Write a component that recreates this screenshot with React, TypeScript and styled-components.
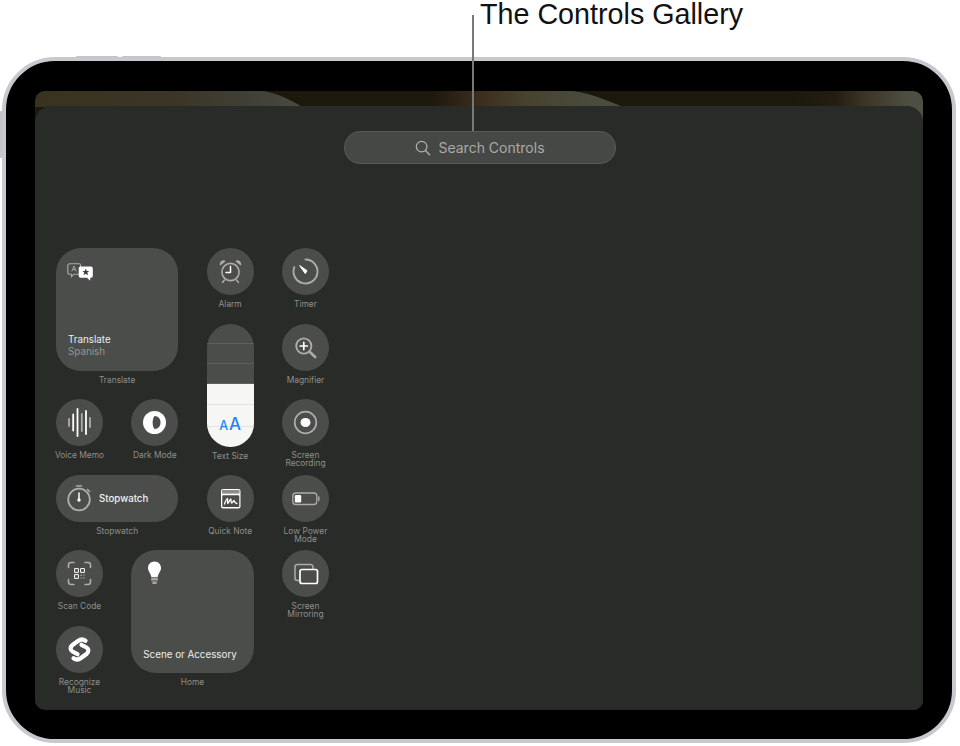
import React from "react";
import styled, { createGlobalStyle } from "styled-components";

const GlobalStyle = createGlobalStyle`
  html, body {
    margin: 0;
    padding: 0;
    background: #ffffff;
  }
  body {
    width: 960px;
    height: 746px;
    overflow: hidden;
    font-family: "Inter", "Liberation Sans", sans-serif;
  }
`;

const Page = styled.div`
  position: relative;
  width: 960px;
  height: 746px;
  display: flex;
  flex-direction: column;
`;

const Caption = styled.div`
  height: 57px;
  padding-left: 480px;
  font-family: "Liberation Sans", Arial, sans-serif;
  font-size: 28.7px;
  line-height: 29px;
  color: #111111;
`;

const Leader = styled.div`
  position: absolute;
  left: 472px;
  top: 15px;
  width: 2px;
  height: 116px;
  background: #77787a;
  z-index: 2;
`;

const Device = styled.div`
  position: relative;
  margin-left: 2px;
  width: 954px;
  height: 686px;
  box-sizing: border-box;
  padding: 30px 29px 29px 29px;
  border: 4px solid #c9c8ce;
  border-radius: 53px;
  background: #000000;
  display: flex;
`;

const HardwareButton = styled.div<{ $left: number; $width: number }>`
  position: absolute;
  top: -5px;
  left: ${(p) => p.$left}px;
  width: ${(p) => p.$width}px;
  height: 2px;
  border-radius: 1px 1px 0 0;
  background: #c6c5cb;
`;

const SideButton = styled.div`
  position: absolute;
  left: -6px;
  top: 50px;
  width: 3px;
  height: 47px;
  background: #c6c5cb;
`;

const Screen = styled.div`
  position: relative;
  flex: 1;
  border-radius: 10px;
  overflow: hidden;
  padding-top: 15px;
  display: flex;
  background: linear-gradient(
    90deg,
    #1c180c 0%,
    #1c180c 85%,
    #221d10 90%,
    #3c3524 93.5%,
    #4d4d41 98%,
    #4f4f43 100%
  );
`;

/* the wallpaper's two light shapes, seen only in the strip above the sheet */
const WallpaperLeft = styled.div`
  position: absolute;
  left: 0;
  top: 0;
  width: 270px;
  height: 16px;
  clip-path: path("M0 0H228C245 3 255 9 268 16H0Z");
  background: linear-gradient(90deg, #3a3220 0%, #3a3525 50%, #42423a 85%, #4a4b40 100%);
`;

const WallpaperMiddle = styled.div`
  position: absolute;
  left: 395px;
  top: 0;
  width: 196px;
  height: 16px;
  clip-path: path("M0 0H143C163 3 175 9 194 16H0Z");
  background: linear-gradient(90deg, #1c180c 0%, #3c2d1d 25%, #47432f 50%, #4a4b3f 85%, #4e4f44 100%);
`;

const Sheet = styled.div`
  position: relative;
  flex: 1;
  border-radius: 16px 16px 0 0;
  background: #292b28;
  padding: 25px 0 0 21px;
  display: flex;
  flex-direction: column;
`;

const SearchBar = styled.div`
  align-self: center;
  margin-left: -19px;
  width: 272px;
  height: 33px;
  box-sizing: border-box;
  border: 1px solid #585a57;
  border-radius: 16px;
  background: #464845;
  color: #a9aaa7;
  font-size: 14px;
  display: flex;
  align-items: center;
  justify-content: center;
  gap: 7px;
`;

const Gallery = styled.div`
  margin-top: 84px;
  display: grid;
  grid-template-columns: repeat(4, 47px);
  grid-auto-rows: 47px;
  column-gap: 28.33px;
  row-gap: 28.5px;
`;

const Cell = styled.div<{ $col: number; $row: number; $colSpan?: number; $rowSpan?: number }>`
  grid-column: ${(p) => p.$col} / span ${(p) => p.$colSpan ?? 1};
  grid-row: ${(p) => p.$row} / span ${(p) => p.$rowSpan ?? 1};
  display: flex;
  flex-direction: column;
  align-items: center;
`;

const RoundTile = styled.div`
  flex: none;
  width: 47px;
  height: 47px;
  border-radius: 50%;
  background: #4b4d4a;
`;

const PillTile = styled.div`
  flex: none;
  align-self: stretch;
  height: 47px;
  border-radius: 24px;
  background: #4b4d4a;
  display: flex;
  align-items: center;
  color: #f1f1ef;
  font-size: 9.7px;
  font-weight: 500;
`;

const SquareTile = styled.div`
  flex: none;
  align-self: stretch;
  height: 122.5px;
  box-sizing: border-box;
  padding: 12px;
  border-radius: 25px;
  background: #4b4d4a;
  display: flex;
  flex-direction: column;
  justify-content: space-between;
`;

const TileGlyph = styled.svg`
  display: block;
`;

const TileTitle = styled.div`
  font-size: 9.8px;
  line-height: 12px;
  font-weight: 400;
  color: #eeeeec;
  white-space: nowrap;
`;

const TileSubtitle = styled.div`
  margin-bottom: 1px;
  font-size: 9.8px;
  line-height: 12px;
  font-weight: 400;
  color: #949693;
`;

const Label = styled.div`
  margin-top: 5px;
  width: 76px;
  text-align: center;
  font-size: 8.4px;
  line-height: 8.3px;
  color: #8e8f8c;
`;

const Slider = styled.div`
  position: relative;
  flex: none;
  align-self: stretch;
  height: 123.5px;
  border-radius: 24px;
  overflow: hidden;
  display: flex;
  flex-direction: column;
`;

const SliderStep = styled.div<{ $lit?: boolean; $last?: boolean }>`
  flex: ${(p) => (p.$lit ? 1.07 : 1)} 1 0;
  background: ${(p) => (p.$lit ? "#f6f6f4" : "#4b4d4a")};
  border-bottom: ${(p) =>
    p.$last ? "none" : `1px solid ${p.$lit ? "#e2e2e0" : "#5d5f5b"}`};
`;

const SizeMark = styled.div`
  position: absolute;
  left: 0;
  right: 0;
  bottom: 13px;
  display: flex;
  justify-content: center;
  align-items: baseline;
  gap: 1px;
  color: #1c86f2;
  font-weight: 500;
  line-height: 16px;
`;

const SmallA = styled.span`
  font-size: 12.5px;
`;

const LargeA = styled.span`
  font-size: 17px;
`;

const StopwatchText = styled.span`
  margin-left: -4px;
`;

const GRAY = "#acadaa";
const WHITE = "#ffffff";
const TILE = "#4b4d4a";

const Icon = ({ children }: { children: React.ReactNode }) => (
  <TileGlyph width="47" height="47" viewBox="0 0 47 47" fill="none">
    {children}
  </TileGlyph>
);

const AlarmIcon = () => (
  <Icon>
    <circle cx="23.5" cy="24" r="8.6" stroke={GRAY} strokeWidth="1.6" />
    <path d="M23.5 18.5V24.5H19" stroke={WHITE} strokeWidth="1.5" strokeLinecap="round" strokeLinejoin="round" />
    <path d="M13.5 16.5C13.8 14.5 15.5 13 17.5 13.2ZM33.5 16.5C33.2 14.5 31.5 13 29.5 13.2Z" stroke={GRAY} strokeWidth="1.6" strokeLinejoin="round" />
    <path d="M17.5 32L15.5 34.5M29.5 32L31.5 34.5" stroke={GRAY} strokeWidth="1.5" strokeLinecap="round" />
  </Icon>
);

const TimerIcon = () => (
  <Icon>
    <path d="M23.5 11.5A12 12 0 1 1 12.3 19.2" stroke={GRAY} strokeWidth="1.9" strokeLinecap="round" />
    <path d="M23.3 25.6L17.6 17.6L25 22.7Z" fill={WHITE} stroke={WHITE} strokeWidth="1" strokeLinejoin="round" />
  </Icon>
);

const MagnifierIcon = () => (
  <Icon>
    <circle cx="21.8" cy="22" r="7.6" stroke={GRAY} strokeWidth="1.9" />
    <path d="M21.8 18.4V25.6M18.2 22H25.4" stroke={WHITE} strokeWidth="1.7" strokeLinecap="round" />
    <path d="M27.6 27.8L33.2 33" stroke={GRAY} strokeWidth="2.6" strokeLinecap="round" />
  </Icon>
);

const RecordIcon = () => (
  <Icon>
    <circle cx="23.5" cy="23.5" r="10.8" stroke={GRAY} strokeWidth="1.7" />
    <ellipse cx="23.5" cy="23.5" rx="5" ry="4.6" fill={WHITE} />
  </Icon>
);

const VoiceMemoIcon = () => (
  <Icon>
    <path d="M13 20V27M25.8 15V32M34 19V28" stroke={GRAY} strokeWidth="1.8" strokeLinecap="round" />
    <path d="M17.2 15.5V31.5M21.5 10V37M30 12V35" stroke={WHITE} strokeWidth="1.8" strokeLinecap="round" />
  </Icon>
);

const DarkModeIcon = () => (
  <Icon>
    <circle cx="23.5" cy="23.5" r="11.5" fill={WHITE} />
    <path d="M23.5 17C27.5 17 29.5 20 29.5 23.5C29.5 27 27.5 30 23.5 30C21 27 21 20 23.5 17Z" fill={TILE} />
  </Icon>
);

const StopwatchIcon = () => (
  <Icon>
    <circle cx="23" cy="24.5" r="10.8" stroke={GRAY} strokeWidth="1.8" />
    <path d="M20.5 11H25.5M31.5 14.5L33.5 16.5" stroke={GRAY} strokeWidth="1.6" strokeLinecap="round" />
    <path d="M23 18V24.5" stroke={WHITE} strokeWidth="1.5" strokeLinecap="round" />
    <circle cx="23" cy="25" r="1.7" fill={WHITE} />
  </Icon>
);

const QuickNoteIcon = () => (
  <Icon>
    <rect x="14" y="14" width="19.5" height="19.5" rx="2" fill={WHITE} />
    <rect x="15" y="15" width="17.5" height="3.6" fill="#8d8e8c" />
    <rect x="15.3" y="20.2" width="17" height="11.8" rx="0.8" fill={TILE} />
    <path d="M17.5 29C18.5 26 19.5 24 20.5 23.5C21 25 20 28 20.8 28.5C22 28 22.5 24.5 23.8 24C24.3 25.5 23.8 27.5 24.6 28C25.5 28 26 26.5 27 25.5C27.3 26.5 28 28 29.8 28.5" stroke={WHITE} strokeWidth="1.3" strokeLinecap="round" strokeLinejoin="round" />
  </Icon>
);

const BatteryIcon = () => (
  <Icon>
    <rect x="10.8" y="18" width="24" height="11.5" rx="3" stroke={GRAY} strokeWidth="1.3" />
    <rect x="12.8" y="20" width="6.4" height="7.5" rx="1.2" fill={WHITE} />
    <path d="M36.8 22V25.6" stroke={GRAY} strokeWidth="1.4" strokeLinecap="round" />
  </Icon>
);

const MirrorIcon = () => (
  <Icon>
    <path d="M17 30.5H15.5A2.5 2.5 0 0 1 13 28V17A2.5 2.5 0 0 1 15.5 14.5H28.5A2.5 2.5 0 0 1 31 17V19" stroke={GRAY} strokeWidth="1.5" />
    <rect x="18" y="19.5" width="17.5" height="14" rx="2" stroke={WHITE} strokeWidth="1.7" />
  </Icon>
);

const ScanIcon = () => (
  <Icon>
    <path d="M12.5 17.5V15A2.5 2.5 0 0 1 15 12.5H18M29 12.5H32A2.5 2.5 0 0 1 34.5 15V17.5M34.5 29.5V32A2.5 2.5 0 0 1 32 34.5H29M18 34.5H15A2.5 2.5 0 0 1 12.5 32V29.5" stroke={GRAY} strokeWidth="1.6" strokeLinecap="round" />
    <path d="M18.6 18.6H22.4V22.4H18.6ZM24.6 18.6H28.4V22.4H24.6ZM18.6 24.6H22.4V28.4H18.6Z" stroke={WHITE} strokeWidth="1" />
    <path d="M24.6 24.6H26V26H24.6ZM27.2 27.2H28.6V28.6H27.2ZM24.6 27.4H25.8V28.6H24.6ZM27.4 24.6H28.6V25.8H27.4Z" fill={GRAY} />
  </Icon>
);

const ShazamIcon = () => (
  <Icon>
    <path d="M29.5 14.8C27 13 24 13.5 22 15L16.5 19C14 21 14 24 16.5 25.5L21.5 28.2" stroke={WHITE} strokeWidth="4.2" strokeLinecap="round" />
    <path d="M17.5 32.2C20 34 23 33.5 25 32L30.5 28C33 26 33 23 30.5 21.5L25.5 18.8" stroke={WHITE} strokeWidth="4.2" strokeLinecap="round" />
  </Icon>
);

const TranslateIcon = () => (
  <svg width="27" height="20" viewBox="0 0 27 20" fill="none" style={{ marginTop: 3, marginLeft: -1 }}>
    <path d="M2.5 0.8H12A1.7 1.7 0 0 1 13.7 2.5V9.5A1.7 1.7 0 0 1 12 11.2H7L4.5 13.6V11.2H2.5A1.7 1.7 0 0 1 0.8 9.5V2.5A1.7 1.7 0 0 1 2.5 0.8Z" stroke={GRAY} strokeWidth="1.1" />
    <path d="M4.8 8.4L7 3L9.2 8.4M5.6 6.6H8.4" stroke={GRAY} strokeWidth="0.9" />
    <path d="M13.5 3.6H24A1.8 1.8 0 0 1 25.8 5.4V13A1.8 1.8 0 0 1 24 14.8H23.2V17.8L20 14.8H13.5A1.8 1.8 0 0 1 11.7 13V5.4A1.8 1.8 0 0 1 13.5 3.6Z" fill={WHITE} />
    <path d="M18.8 5.5L19.8 8H22.3L20.3 9.6L21.1 12.2L18.8 10.7L16.5 12.2L17.3 9.6L15.3 8H17.8Z" fill="#3b3c3a" />
  </svg>
);

const BulbIcon = () => (
  <svg width="15" height="24" viewBox="0 0 15 24" fill="none" style={{ marginTop: -1, marginLeft: 4 }}>
    <path d="M7.5 0.6C3.7 0.6 1 3.5 1 7C1 10.2 3.6 12 4.4 16.2H10.6C11.4 12 14 10.2 14 7C14 3.5 11.3 0.6 7.5 0.6Z" fill={WHITE} />
    <path d="M4.6 18H10.4" stroke={WHITE} strokeWidth="1.2" strokeLinecap="round" />
    <path d="M4.8 20H10.2" stroke={GRAY} strokeWidth="1.2" strokeLinecap="round" />
    <path d="M5.8 22H9.2" stroke={WHITE} strokeWidth="1.1" strokeLinecap="round" />
  </svg>
);

const SearchIcon = () => (
  <svg width="16" height="16" viewBox="0 0 16 16" fill="none">
    <circle cx="6.6" cy="6.6" r="5.3" stroke="#b0b1ae" strokeWidth="1.2" />
    <path d="M10.5 10.5L14.6 14.8" stroke="#b0b1ae" strokeWidth="1.4" strokeLinecap="round" />
  </svg>
);

const STEPS = [false, false, false, true, true, true];

const App = () => (
  <Page>
    <GlobalStyle />
    <Caption>The Controls Gallery</Caption>
    <Leader />
    <Device>
      <HardwareButton $left={70} $width={42} />
      <HardwareButton $left={116} $width={39} />
      <SideButton />
      <Screen>
        <WallpaperLeft />
        <WallpaperMiddle />
        <Sheet>
          <SearchBar>
            <SearchIcon />
            Search Controls
          </SearchBar>
          <Gallery>
            <Cell $col={1} $row={1} $colSpan={2} $rowSpan={2}>
              <SquareTile>
                <TranslateIcon />
                <div>
                  <TileTitle>Translate</TileTitle>
                  <TileSubtitle>Spanish</TileSubtitle>
                </div>
              </SquareTile>
              <Label>Translate</Label>
            </Cell>
            <Cell $col={3} $row={1}>
              <RoundTile><AlarmIcon /></RoundTile>
              <Label>Alarm</Label>
            </Cell>
            <Cell $col={4} $row={1}>
              <RoundTile><TimerIcon /></RoundTile>
              <Label>Timer</Label>
            </Cell>
            <Cell $col={3} $row={2} $rowSpan={2}>
              <Slider>
                {STEPS.map((lit, i) => (
                  <SliderStep key={i} $lit={lit} $last={i === STEPS.length - 1} />
                ))}
                <SizeMark>
                  <SmallA>A</SmallA>
                  <LargeA>A</LargeA>
                </SizeMark>
              </Slider>
              <Label>Text Size</Label>
            </Cell>
            <Cell $col={4} $row={2}>
              <RoundTile><MagnifierIcon /></RoundTile>
              <Label>Magnifier</Label>
            </Cell>
            <Cell $col={1} $row={3}>
              <RoundTile><VoiceMemoIcon /></RoundTile>
              <Label>Voice Memo</Label>
            </Cell>
            <Cell $col={2} $row={3}>
              <RoundTile><DarkModeIcon /></RoundTile>
              <Label>Dark Mode</Label>
            </Cell>
            <Cell $col={4} $row={3}>
              <RoundTile><RecordIcon /></RoundTile>
              <Label>Screen<br />Recording</Label>
            </Cell>
            <Cell $col={1} $row={4} $colSpan={2}>
              <PillTile>
                <StopwatchIcon />
                <StopwatchText>Stopwatch</StopwatchText>
              </PillTile>
              <Label>Stopwatch</Label>
            </Cell>
            <Cell $col={3} $row={4}>
              <RoundTile><QuickNoteIcon /></RoundTile>
              <Label>Quick Note</Label>
            </Cell>
            <Cell $col={4} $row={4}>
              <RoundTile><BatteryIcon /></RoundTile>
              <Label>Low Power<br />Mode</Label>
            </Cell>
            <Cell $col={1} $row={5}>
              <RoundTile><ScanIcon /></RoundTile>
              <Label>Scan Code</Label>
            </Cell>
            <Cell $col={2} $row={5} $colSpan={2} $rowSpan={2}>
              <SquareTile>
                <BulbIcon />
                <TileTitle>Scene or Accessory</TileTitle>
              </SquareTile>
              <Label>Home</Label>
            </Cell>
            <Cell $col={4} $row={5}>
              <RoundTile><MirrorIcon /></RoundTile>
              <Label>Screen<br />Mirroring</Label>
            </Cell>
            <Cell $col={1} $row={6}>
              <RoundTile><ShazamIcon /></RoundTile>
              <Label>Recognize<br />Music</Label>
            </Cell>
          </Gallery>
        </Sheet>
      </Screen>
    </Device>
  </Page>
);

export default App;
